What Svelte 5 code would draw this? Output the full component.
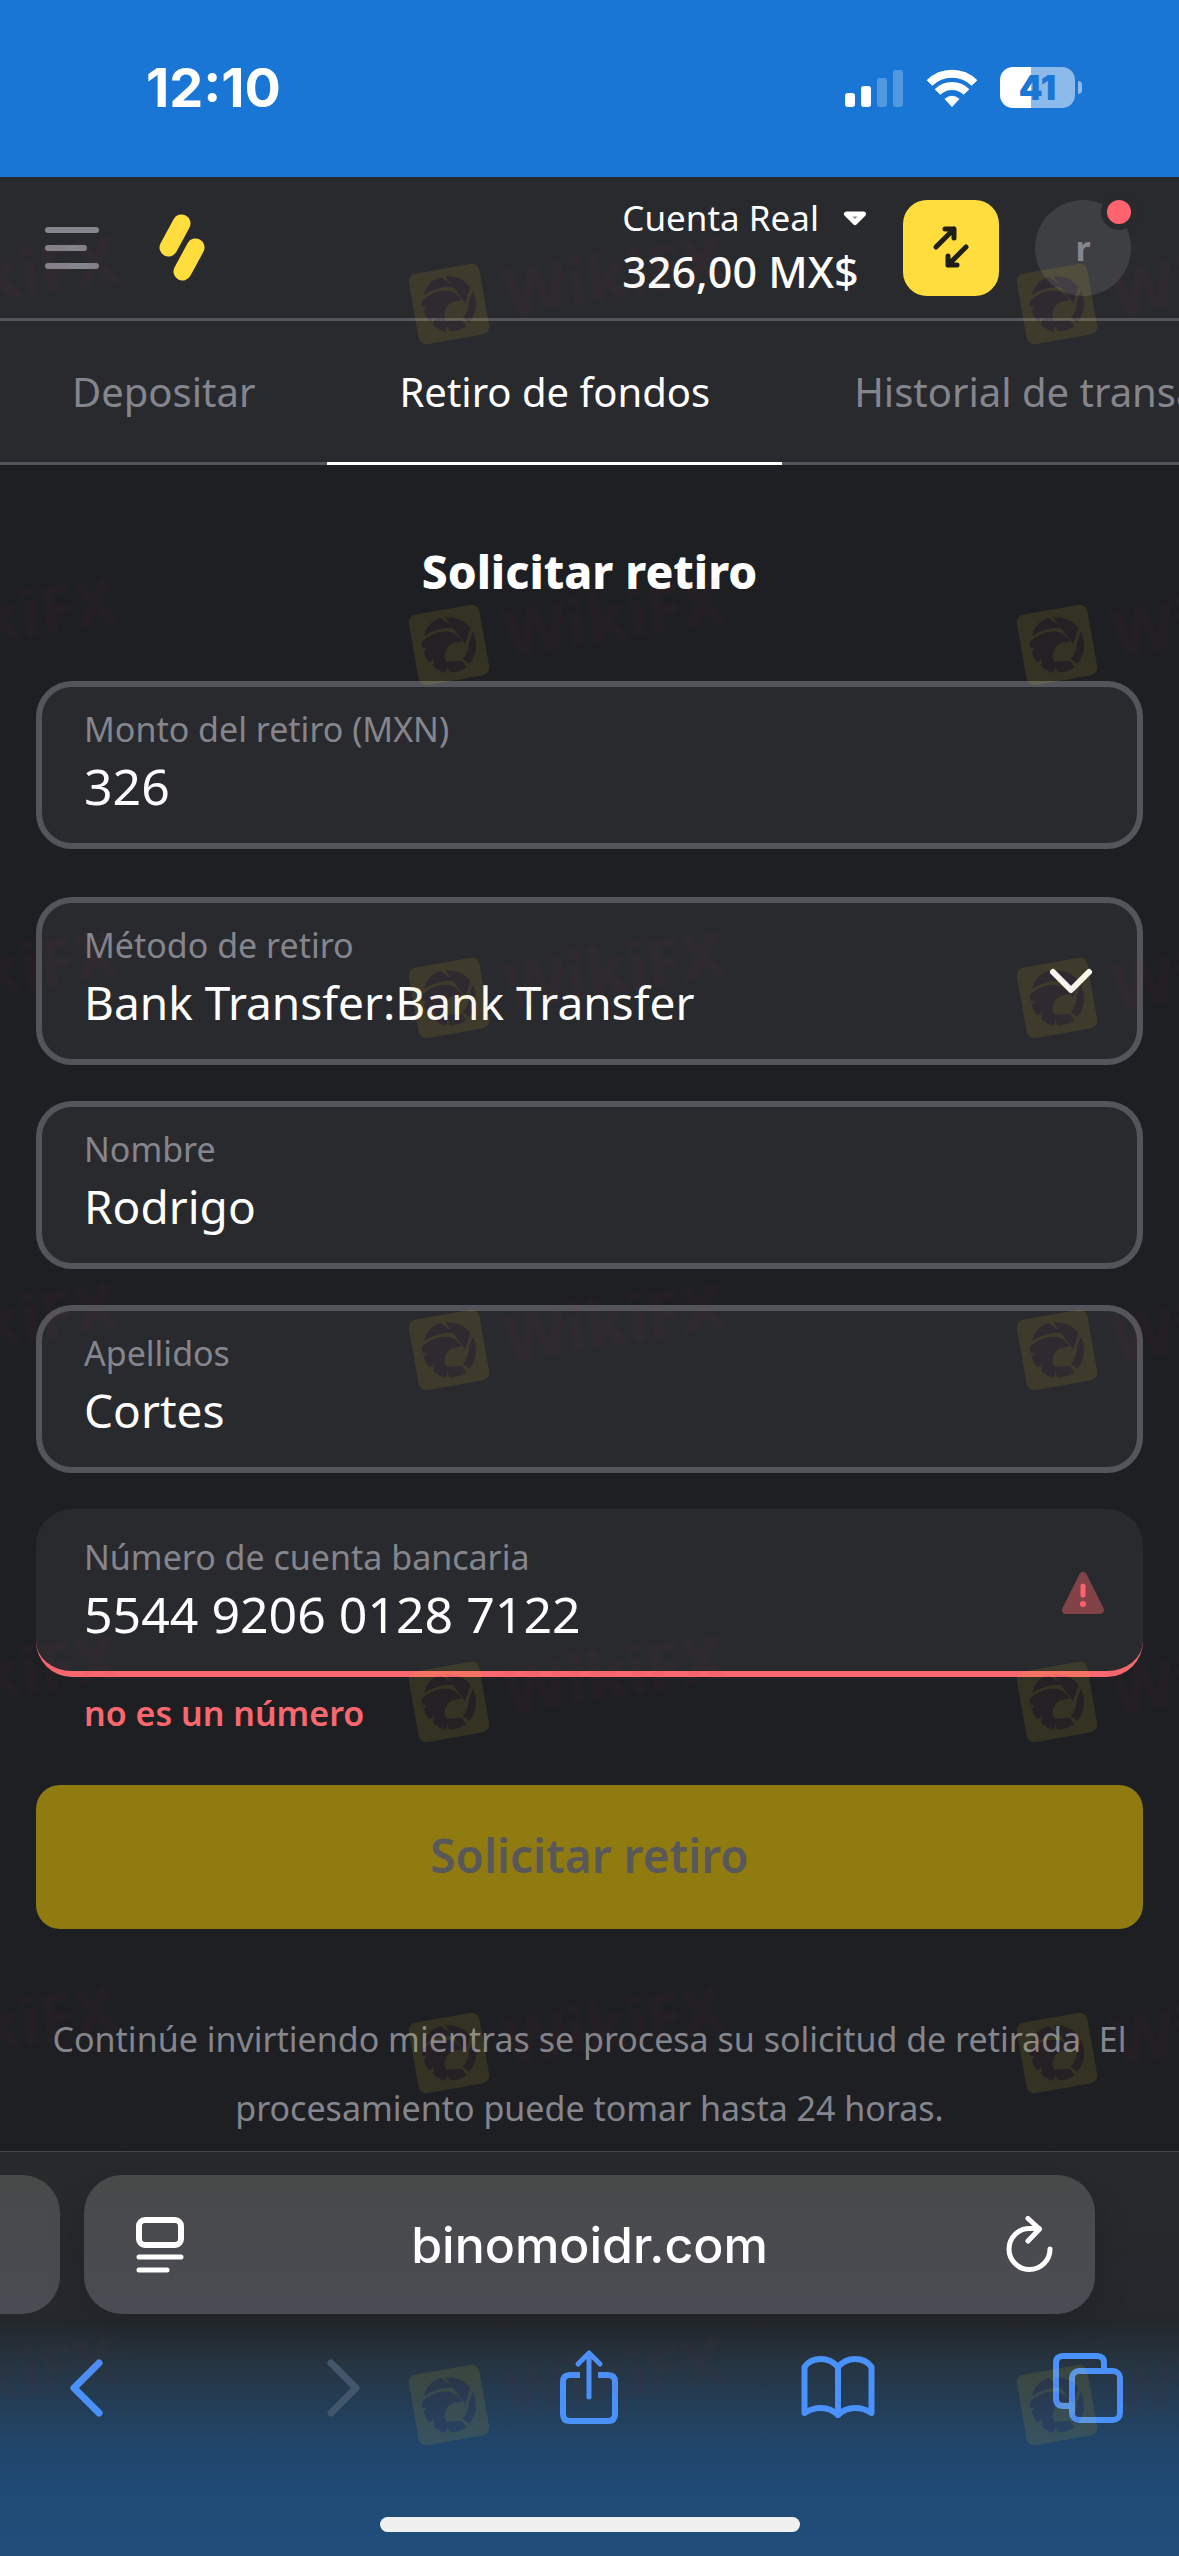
<script>
    let amount = $state('326');
    let method = $state('bank');
    let firstName = $state('Rodrigo');
    let lastName = $state('Cortes');
    let account = $state('5544 9206 0128 7122');

    const tabs = [
        { label: 'Depositar', href: '#deposit' },
        { label: 'Retiro de fondos', href: '#withdraw', active: true },
        { label: 'Historial de transacciones', href: '#history' }
    ];

    // Centre of every badge in the watermark grid
    const stampColumns = [-158, 449, 1057];
    const stampRows = [304, 645, 998, 1350, 1702, 2053, 2405];
</script>

<div class="screen">
    <div class="status">
        <time>12:10</time>
        <div class="status-icons">
            <svg width="59" height="42" viewBox="0 0 59 42" aria-hidden="true">
                <g fill="#fff">
                    <rect x="0" y="26" width="10" height="14" rx="3" />
                    <rect x="16" y="19" width="10" height="21" rx="3" />
                    <rect x="32" y="11" width="10" height="29" rx="3" opacity="0.25" />
                    <rect x="48" y="3" width="10" height="37" rx="3" opacity="0.25" />
                </g>
            </svg>
            <svg width="52" height="42" viewBox="0 0 52 42" aria-hidden="true">
                <g fill="none" stroke="#fff" stroke-width="8">
                    <path d="M3.500 16 A32 32 0 0 1 48.500 16" />
                    <path d="M11.500 25 A20.500 20.500 0 0 1 40.500 25" />
                </g>
                <path d="M26 40 L18.500 32 Q26 25.500 33.500 32 Z" fill="#fff" />
            </svg>
            <div class="battery"><span>41</span></div>
        </div>
    </div>

    <header>
        <button class="plain" aria-label="Menú">
            <svg width="54" height="42" viewBox="0 0 54 42">
                <g stroke="#85868d" stroke-width="6" stroke-linecap="round">
                    <path d="M3 3 H51 M3 21 H39 M3 39 H51" />
                </g>
            </svg>
        </button>
        <a class="logo" href="#home" aria-label="Inicio">
            <svg width="46" height="67" viewBox="0 0 46 67">
                <g stroke="#ffdd3c" stroke-width="18" stroke-linecap="round">
                    <path d="M22.500 9.500 L9.500 33.500 M36.500 33.500 L23.500 57.500" />
                </g>
            </svg>
        </a>
        <button class="plain account">
            <span class="account-name">
                Cuenta Real
                <svg width="24" height="16" viewBox="0 0 24 16" aria-hidden="true">
                    <path d="M3.500 4 H20.500 L12 12.500 Z" fill="#8a8a90" stroke="#fff" stroke-width="5" stroke-linejoin="round" />
                </svg>
            </span>
            <span class="account-sum">326,00 MX$</span>
        </button>
        <button class="exchange" aria-label="Depositar y retirar">
            <svg width="96" height="96" viewBox="0 0 96 96">
                <g fill="none" stroke="#1f1f17" stroke-width="5" stroke-linecap="round" stroke-linejoin="round">
                    <path d="M33 47 L51 29 M42 29 H51 V38" />
                    <path d="M63 47 L45 65 M54 65 H45 V56" />
                </g>
            </svg>
        </button>
        <button class="avatar" aria-label="Perfil">r<span class="dot"></span></button>
    </header>

    <nav>
        {#each tabs as tab}
            <a href={tab.href} class:active={tab.active}>{tab.label}</a>
        {/each}
    </nav>

    <main>
        <h1>Solicitar retiro</h1>

        <form onsubmit={(e) => e.preventDefault()}>
            <div class="field amount">
                <div class="body">
                    <label for="amount">Monto del retiro (MXN)</label>
                    <input id="amount" class="numeric" inputmode="decimal" bind:value={amount} />
                </div>
            </div>
            <div class="field">
                <div class="body">
                    <label for="method">Método de retiro</label>
                    <select id="method" bind:value={method}>
                        <option value="bank">Bank Transfer:Bank Transfer</option>
                    </select>
                </div>
                <svg width="72" height="48" viewBox="0 0 72 48" aria-hidden="true">
                    <path d="M18 15 L36 33 L54 15" fill="none" stroke="#fff" stroke-width="6" stroke-linecap="round" stroke-linejoin="round" />
                </svg>
            </div>
            <div class="field">
                <div class="body">
                    <label for="first-name">Nombre</label>
                    <input id="first-name" bind:value={firstName} />
                </div>
            </div>
            <div class="field">
                <div class="body">
                    <label for="last-name">Apellidos</label>
                    <input id="last-name" bind:value={lastName} />
                </div>
            </div>
            <div class="field invalid">
                <div class="body">
                    <label for="account">Número de cuenta bancaria</label>
                    <input
                        id="account"
                        class="numeric"
                        inputmode="numeric"
                        bind:value={account}
                        aria-invalid="true"
                        aria-describedby="account-error"
                    />
                </div>
                <svg width="48" height="48" viewBox="0 0 48 48" aria-hidden="true">
                    <path d="M24 7 L41 41 H7 Z" fill="#814248" stroke="#814248" stroke-width="8" stroke-linejoin="round" />
                    <path d="M24 17 V26" stroke="#ff646e" stroke-width="5" stroke-linecap="round" />
                    <circle cx="24" cy="35" r="3" fill="#ff646e" />
                </svg>
            </div>
            <p class="error" id="account-error">no es un número</p>
            <button class="submit" disabled>Solicitar retiro</button>
        </form>

        <p class="note">Continúe invirtiendo mientras se procesa su solicitud de retirada&nbsp; El procesamiento puede tomar hasta 24 horas.</p>
    </main>

    <footer>
        <div class="address-row">
            <div class="previous"></div>
            <div class="address">
                <button class="plain" aria-label="Ajustes de página">
                    <svg width="48" height="56" viewBox="0 0 48 56">
                        <g fill="none" stroke="#fff" stroke-width="5" stroke-linecap="round">
                            <rect x="3" y="3" width="42" height="25" rx="6" stroke-width="6" />
                            <path d="M3 40 H45 M3 53 H31" />
                        </g>
                    </svg>
                </button>
                <span>binomoidr.com</span>
                <button class="plain reload" aria-label="Recargar">
                    <svg width="48" height="58" viewBox="0 0 48 58">
                        <g fill="none" stroke="#fff" stroke-width="5" stroke-linecap="round" stroke-linejoin="round">
                            <path d="M45 33 A20.500 20.500 0 1 1 24.500 12.500 H34" />
                            <path d="M23 2.500 L34.500 13 L23 25" />
                        </g>
                    </svg>
                </button>
            </div>
        </div>
        <div class="toolbar">
            <button class="plain" aria-label="Atrás">
                <svg width="72" height="78" viewBox="0 0 72 78">
                    <path d="M47 14 L22 39 L47 64" fill="none" stroke="#4a92fb" stroke-width="7" stroke-linecap="round" stroke-linejoin="round" />
                </svg>
            </button>
            <button class="plain" aria-label="Adelante">
                <svg width="72" height="78" viewBox="0 0 72 78">
                    <path d="M30 14 L55 39 L30 64" fill="none" stroke="#43566b" stroke-width="7" stroke-linecap="round" stroke-linejoin="round" />
                </svg>
            </button>
            <button class="plain" aria-label="Compartir">
                <svg width="72" height="78" viewBox="0 0 72 78">
                    <g fill="none" stroke="#4a92fb" stroke-width="6" stroke-linecap="round" stroke-linejoin="round">
                        <path d="M29 26 H19 Q12 26 12 33 V65 Q12 72 19 72 H57 Q64 72 64 65 V33 Q64 26 57 26 H47" stroke-linecap="butt" />
                        <path d="M38 48 V5 M27 15 L38 4 L49 15" stroke-width="5" />
                    </g>
                </svg>
            </button>
            <button class="plain" aria-label="Marcadores">
                <svg width="76" height="78" viewBox="0 0 76 78">
                    <g fill="none" stroke="#4a92fb" stroke-width="6" stroke-linecap="round" stroke-linejoin="round">
                        <path d="M38 18 Q31 10 21 10 Q10 10 4.500 18 V64 Q12 59 21 59 Q31 59 38 66 Q45 59 55 59 Q64 59 71.500 64 V18 Q66 10 55 10 Q45 10 38 18 Z" />
                        <path d="M38 18 V66" />
                    </g>
                </svg>
            </button>
            <button class="plain" aria-label="Pestañas">
                <svg width="72" height="78" viewBox="0 0 72 78">
                    <g fill="none" stroke="#4a92fb" stroke-width="6">
                        <rect x="19" y="22" width="48" height="49" rx="7" />
                        <path d="M19 57 H11 Q3 57 3 50 V14 Q3 7 10 7 H44 Q51 7 51 14 V22" />
                    </g>
                </svg>
            </button>
        </div>
        <div class="home-bar"></div>
    </footer>

    <svg class="watermark" aria-hidden="true">
        <defs>
            <path
                id="eagle"
                d="M-23 -13 Q-17 -27 -3 -28 L8 -16 Q-8 -20 -23 -13 Z
                   M1 -28 Q18 -26 24 -13 L16 2 Z
                   M26 -9 Q30 10 17 22 L11 16 Q19 10 20 1 Z
                   M13 25 Q5 29 -4 27 L-7 16 L10 18 Z
                   M-26 -8 Q-12 -17 2 -13 Q11 -9 13 -1 Q5 -3 -1 1 Q-8 7 -6 15 Q-4 22 -8 27 Q-15 24 -19 18 L-17 11 L-22 14 Q-26 8 -26 2 L-22 -1 L-27 -2 Z"
            />
            <mask id="cutout">
                <rect x="-36" y="-36" width="72" height="72" rx="8" fill="#fff" />
                <use href="#eagle" fill="#000" />
            </mask>
            <g id="stamp">
                <g transform="rotate(-10)">
                    <rect x="-36" y="-36" width="72" height="72" rx="8" fill="#e6c81e" opacity="0.11" mask="url(#cutout)" />
                    <use href="#eagle" fill="#9c3040" opacity="0.06" />
                </g>
                <text x="58" y="12" transform="rotate(-9 58 12)">WikiFX</text>
            </g>
        </defs>
        {#each stampRows as y}
            {#each stampColumns as x}
                <use href="#stamp" {x} {y} />
            {/each}
        {/each}
    </svg>
</div>

<style>
    :global(body) {
        background: #1e1f23;
    }

    .screen {
        position: relative;
        display: flex;
        flex-direction: column;
        min-height: 100vh;
        overflow: hidden;
        background: #1e1f23;
        color: #fff;
        font-family: "Noto Sans", "Open Sans", sans-serif;
    }

    button, input, select {
        margin: 0;
        padding: 0;
        border: 0;
        background: none;
        color: inherit;
        font-family: inherit;
    }

    svg {
        display: block;
        flex: none;
    }

    .plain {
        display: flex;
    }

    .status {
        display: flex;
        justify-content: space-between;
        align-items: center;
        box-sizing: border-box;
        height: 177px;
        padding: 0 104px 2px 146px;
        background: #1976d5;
        font-family: Inter, sans-serif;
    }

    time {
        font-size: 54px;
        font-weight: 700;
    }

    .status-icons {
        display: flex;
        align-items: center;
        gap: 22px;
    }

    .battery {
        position: relative;
        width: 75px;
        height: 41px;
        border-radius: 13px;
        background: linear-gradient(to right, #fff 41%, #8cbaea 41%);
        color: #1976d5;
        font-size: 34px;
        font-weight: 900;
        line-height: 41px;
        text-align: center;
    }

    .battery::after {
        content: '';
        position: absolute;
        left: 78px;
        top: 14px;
        width: 4px;
        height: 13px;
        border-radius: 0 4px 4px 0;
        background: #8cbaea;
    }

    header {
        display: flex;
        align-items: center;
        height: 141px;
        padding: 0 48px 0 45px;
        border-bottom: 3px solid #54555a;
        background: #292a2e;
    }

    .logo {
        margin-left: 60px;
    }

    .account {
        flex-direction: column;
        align-items: flex-start;
        margin-left: auto;
        margin-right: 36px;
        padding-bottom: 6px;
    }

    .account-name {
        display: flex;
        align-items: center;
        gap: 24px;
        font-size: 35px;
        line-height: 54px;
    }

    .account-sum {
        font-size: 43px;
        font-weight: 500;
        line-height: 54px;
    }

    .exchange {
        width: 96px;
        height: 96px;
        border-radius: 24px;
        background: #ffdd3c;
    }

    .avatar {
        position: relative;
        width: 96px;
        height: 96px;
        margin-left: 36px;
        border-radius: 50%;
        background: #3e3f43;
        color: #85868d;
        font-size: 34px;
        font-weight: 700;
    }

    .dot {
        position: absolute;
        top: -6px;
        right: -6px;
        width: 24px;
        height: 24px;
        border: 6px solid #292a2e;
        border-radius: 50%;
        background: #ff646e;
    }

    nav {
        display: flex;
        overflow: hidden;
        background: #292a2e;
        box-shadow: inset 0 -3px #54555a;
    }

    nav a {
        padding: 0 72px;
        border-bottom: 3px solid transparent;
        color: #85868d;
        font-size: 40px;
        line-height: 141px;
        text-decoration: none;
        white-space: nowrap;
    }

    nav a.active {
        border-color: #fff;
        color: #fff;
    }

    main {
        flex: 1;
        padding: 70px 36px 0;
    }

    h1 {
        margin: 0 0 74px;
        font-size: 46px;
        font-weight: 800;
        line-height: 72px;
        text-align: center;
    }

    form {
        display: flex;
        flex-direction: column;
    }

    .field {
        display: flex;
        align-items: center;
        box-sizing: border-box;
        height: 168px;
        margin-bottom: 36px;
        padding: 0 30px 0 42px;
        border: 6px solid #54555a;
        border-radius: 36px;
        background: #292a2e;
    }

    .field.amount {
        margin-bottom: 48px;
    }

    .field.invalid {
        margin-bottom: 12px;
        padding: 6px 36px 0 48px;
        border-width: 0 0 6px;
        border-color: #f9686f;
    }

    .body {
        display: flex;
        flex: 1;
        flex-direction: column;
        min-width: 0;
        padding-bottom: 6px;
    }

    label {
        color: #85868d;
        font-size: 34px;
        line-height: 48px;
    }

    input, select {
        width: 100%;
        height: 66px;
        font-size: 46px;
        outline: none;
        appearance: none;
    }

    .numeric {
        font-size: 50px;
    }

    .error {
        margin: 0;
        padding: 0 48px;
        color: #f9686f;
        font-size: 34px;
        font-weight: 600;
        line-height: 48px;
    }

    .submit {
        height: 144px;
        margin-top: 48px;
        padding-bottom: 4px;
        border-radius: 24px;
        background: #907b10;
        color: #58585b;
        font-size: 46px;
        font-weight: 600;
    }

    .note {
        margin: 76px 0 0;
        color: #85868d;
        font-size: 34px;
        line-height: 69px;
        text-align: center;
    }

    footer {
        border-top: 1px solid #46474a;
        background: linear-gradient(#292a2b, #24282d 42%, #263440 52%, #21456a 72%, #1f4b75 85%, #204d7a);
    }

    .address-row {
        display: flex;
        gap: 24px;
        padding: 23px 84px 0 0;
    }

    .previous {
        width: 60px;
        border-radius: 0 38px 38px 0;
        background: linear-gradient(#484949, #4a4c54);
    }

    .address {
        display: grid;
        flex: 1;
        grid-template-columns: 1fr auto 1fr;
        align-items: center;
        height: 139px;
        padding: 0 42px 0 52px;
        border-radius: 38px;
        background: linear-gradient(#484949, #4a4c54);
        box-shadow: 0 6px 36px rgba(0, 0, 0, 0.15);
        font-family: Inter, sans-serif;
        font-size: 50px;
        font-weight: 500;
    }

    .address span {
        margin-right: 10px;
    }

    .reload {
        justify-self: end;
    }

    .toolbar {
        display: flex;
        justify-content: space-between;
        padding: 35px 54px 0 52px;
    }

    .home-bar {
        width: 420px;
        height: 15px;
        margin: 90px auto 24px;
        border-radius: 8px;
        background: #f0f0f1;
    }

    .watermark {
        position: absolute;
        inset: 0;
        width: 100%;
        height: 100%;
        pointer-events: none;
    }

    .watermark text {
        fill: #a03038;
        font-size: 64px;
        font-weight: 800;
        opacity: 0.045;
    }
</style>
